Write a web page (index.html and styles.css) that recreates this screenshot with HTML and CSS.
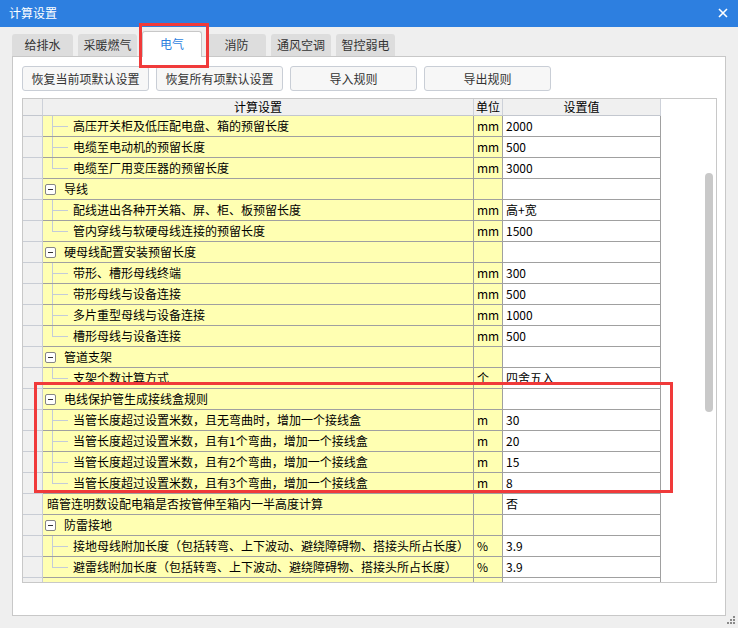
FILE: index.html
```html
<!DOCTYPE html>
<html lang="zh-CN">
<head>
<meta charset="utf-8">
<title>计算设置</title>
<link rel="stylesheet" href="styles.css">
</head>
<body>
<div class="window">
  <div class="titlebar">
    <span class="title">计算设置</span>
    <svg class="close" width="10" height="10" viewBox="0 0 10 10"><path d="M1 1 L9 9 M9 1 L1 9" stroke="#fff" stroke-width="1.6" fill="none"/></svg>
  </div>
  <div class="tabs">
    <div class="tab w61">给排水</div>
    <div class="tab w59">采暖燃气</div>
    <div class="tab active w60">电气</div>
    <div class="tab w59">消防</div>
    <div class="tab w60">通风空调</div>
    <div class="tab w59">智控弱电</div>
  </div>
  <div class="panel">
    <div class="toolbar">
      <button class="btn">恢复当前项默认设置</button>
      <button class="btn">恢复所有项默认设置</button>
      <button class="btn">导入规则</button>
      <button class="btn">导出规则</button>
    </div>
    <div class="grid">
      <div class="table">
        <div class="row head">
          <div class="rh"></div>
          <div class="c-main">计算设置</div>
          <div class="c-unit">单位</div>
          <div class="c-val">设置值</div>
        </div>

        <div class="row">
          <div class="rh"></div>
          <div class="c-main child"><span class="branch"></span><span class="txt">高压开关柜及低压配电盘、箱的预留长度</span></div>
          <div class="c-unit">mm</div><div class="c-val">2000</div>
        </div>
        <div class="row">
          <div class="rh"></div>
          <div class="c-main child"><span class="branch"></span><span class="txt">电缆至电动机的预留长度</span></div>
          <div class="c-unit">mm</div><div class="c-val">500</div>
        </div>
        <div class="row">
          <div class="rh"></div>
          <div class="c-main child"><span class="branch last"></span><span class="txt">电缆至厂用变压器的预留长度</span></div>
          <div class="c-unit">mm</div><div class="c-val">3000</div>
        </div>

        <div class="row">
          <div class="rh"></div>
          <div class="c-main group"><span class="toggle"></span><span class="txt">导线</span></div>
          <div class="c-unit"></div><div class="c-val"></div>
        </div>
        <div class="row">
          <div class="rh"></div>
          <div class="c-main child"><span class="branch"></span><span class="txt">配线进出各种开关箱、屏、柜、板预留长度</span></div>
          <div class="c-unit">mm</div><div class="c-val">高+宽</div>
        </div>
        <div class="row">
          <div class="rh"></div>
          <div class="c-main child"><span class="branch last"></span><span class="txt">管内穿线与软硬母线连接的预留长度</span></div>
          <div class="c-unit">mm</div><div class="c-val">1500</div>
        </div>

        <div class="row">
          <div class="rh"></div>
          <div class="c-main group"><span class="toggle"></span><span class="txt">硬母线配置安装预留长度</span></div>
          <div class="c-unit"></div><div class="c-val"></div>
        </div>
        <div class="row">
          <div class="rh"></div>
          <div class="c-main child"><span class="branch"></span><span class="txt">带形、槽形母线终端</span></div>
          <div class="c-unit">mm</div><div class="c-val">300</div>
        </div>
        <div class="row">
          <div class="rh"></div>
          <div class="c-main child"><span class="branch"></span><span class="txt">带形母线与设备连接</span></div>
          <div class="c-unit">mm</div><div class="c-val">500</div>
        </div>
        <div class="row">
          <div class="rh"></div>
          <div class="c-main child"><span class="branch"></span><span class="txt">多片重型母线与设备连接</span></div>
          <div class="c-unit">mm</div><div class="c-val">1000</div>
        </div>
        <div class="row">
          <div class="rh"></div>
          <div class="c-main child"><span class="branch last"></span><span class="txt">槽形母线与设备连接</span></div>
          <div class="c-unit">mm</div><div class="c-val">500</div>
        </div>

        <div class="row">
          <div class="rh"></div>
          <div class="c-main group"><span class="toggle"></span><span class="txt">管道支架</span></div>
          <div class="c-unit"></div><div class="c-val"></div>
        </div>
        <div class="row">
          <div class="rh"></div>
          <div class="c-main child"><span class="branch last"></span><span class="txt">支架个数计算方式</span></div>
          <div class="c-unit">个</div><div class="c-val">四舍五入</div>
        </div>

        <div class="row">
          <div class="rh"></div>
          <div class="c-main group"><span class="toggle"></span><span class="txt">电线保护管生成接线盒规则</span></div>
          <div class="c-unit"></div><div class="c-val"></div>
        </div>
        <div class="row">
          <div class="rh"></div>
          <div class="c-main child"><span class="branch"></span><span class="txt">当管长度超过设置米数，且无弯曲时，增加一个接线盒</span></div>
          <div class="c-unit">m</div><div class="c-val">30</div>
        </div>
        <div class="row">
          <div class="rh"></div>
          <div class="c-main child"><span class="branch"></span><span class="txt">当管长度超过设置米数，且有1个弯曲，增加一个接线盒</span></div>
          <div class="c-unit">m</div><div class="c-val">20</div>
        </div>
        <div class="row">
          <div class="rh"></div>
          <div class="c-main child"><span class="branch"></span><span class="txt">当管长度超过设置米数，且有2个弯曲，增加一个接线盒</span></div>
          <div class="c-unit">m</div><div class="c-val">15</div>
        </div>
        <div class="row">
          <div class="rh"></div>
          <div class="c-main child"><span class="branch last"></span><span class="txt">当管长度超过设置米数，且有3个弯曲，增加一个接线盒</span></div>
          <div class="c-unit">m</div><div class="c-val">8</div>
        </div>

        <div class="row">
          <div class="rh"></div>
          <div class="c-main plain"><span class="txt">暗管连明数设配电箱是否按管伸至箱内一半高度计算</span></div>
          <div class="c-unit"></div><div class="c-val">否</div>
        </div>

        <div class="row">
          <div class="rh"></div>
          <div class="c-main group"><span class="toggle"></span><span class="txt">防雷接地</span></div>
          <div class="c-unit"></div><div class="c-val"></div>
        </div>
        <div class="row">
          <div class="rh"></div>
          <div class="c-main child"><span class="branch"></span><span class="txt">接地母线附加长度（包括转弯、上下波动、避绕障碍物、搭接头所占长度）</span></div>
          <div class="c-unit">%</div><div class="c-val">3.9</div>
        </div>
        <div class="row">
          <div class="rh"></div>
          <div class="c-main child"><span class="branch last"></span><span class="txt">避雷线附加长度（包括转弯、上下波动、避绕障碍物、搭接头所占长度）</span></div>
          <div class="c-unit">%</div><div class="c-val">3.9</div>
        </div>

        <div class="row">
          <div class="rh"></div>
          <div class="c-main group"><span class="toggle"></span></div>
          <div class="c-unit"></div><div class="c-val"></div>
        </div>
      </div>
      <div class="spacer"></div>
      <div class="vscroll"><div class="thumb"></div></div>
    </div>
  </div>

  <div class="mark mark-tab"></div>
  <div class="mark mark-rows"></div>
  <svg class="grip" width="10" height="10" viewBox="0 0 10 10">
    <rect x="7" y="1" width="2" height="2" fill="#8a8a8a"/>
    <rect x="4" y="4" width="2" height="2" fill="#8a8a8a"/>
    <rect x="7" y="4" width="2" height="2" fill="#8a8a8a"/>
    <rect x="1" y="7" width="2" height="2" fill="#8a8a8a"/>
    <rect x="4" y="7" width="2" height="2" fill="#8a8a8a"/>
    <rect x="7" y="7" width="2" height="2" fill="#8a8a8a"/>
  </svg>
</div>
</body>
</html>
```

FILE: styles.css
```css
* { box-sizing: border-box; }

html, body {
  margin: 0;
  padding: 0;
}

body {
  width: 738px;
  height: 628px;
  overflow: hidden;
  background: #efefef;
  font-family: "Noto Sans CJK SC", "Microsoft YaHei", "Noto Sans", sans-serif;
  font-size: 12px;
  color: #000;
}

.window {
  position: relative;
  width: 738px;
  height: 628px;
  background: #efefef;
}

.titlebar {
  height: 27px;
  background: #2d7fe0;
  display: flex;
  align-items: center;
  justify-content: space-between;
  padding: 0 10px 1px 9px;
}

.title {
  color: #fff;
  font-size: 12px;
  line-height: 16px;
}

.close {
  display: block;
}

.tabs {
  height: 29px;
  display: flex;
  align-items: flex-end;
  gap: 5px;
  padding-left: 12px;
}

.tab {
  height: 22px;
  background: #dddddd;
  border-radius: 3px 3px 0 0;
  color: #333;
  font-size: 12px;
  line-height: 22px;
  text-align: center;
}

.w61 { width: 61px; }
.w60 { width: 60px; }
.w59 { width: 59px; }

.tab.active {
  position: relative;
  z-index: 1;
  height: 26px;
  margin-bottom: -1px;
  background: #fff;
  border: 1px solid #c8c8c8;
  border-bottom: none;
  color: #2d7fe0;
  line-height: 24px;
}

.panel {
  margin: 0 12px;
  height: 560px;
  background: #fff;
  border: 1px solid #c8c8c8;
  padding: 9px 0 0 9px;
}

.toolbar {
  display: flex;
  gap: 7px;
  height: 25px;
}

.btn {
  width: 127px;
  height: 25px;
  margin: 0;
  padding: 0;
  border: 1px solid #c9ced6;
  border-radius: 3px;
  background: #f7f7f7;
  color: #333;
  font-family: inherit;
  font-size: 12px;
  line-height: 22px;
}

.grid {
  margin-top: 7px;
  width: 695px;
  height: 485px;
  border: 1px solid #c8c8c8;
  background: #fff;
  display: flex;
  overflow: hidden;
}

.table {
  flex: 0 0 638px;
  display: flex;
  flex-direction: column;
}

.spacer {
  flex: 1;
}

.vscroll {
  flex: 0 0 15px;
  padding: 74px 0 0 4px;
}

.thumb {
  width: 8px;
  height: 239px;
  border-radius: 4px;
  background: #c9c9c9;
}

.row {
  display: flex;
  flex: 0 0 21px;
  height: 21px;
}

.row > div {
  border-right: 1px solid #a0a0a0;
  border-bottom: 1px solid #a0a0a0;
  line-height: 20px;
  white-space: nowrap;
  overflow: hidden;
}

.rh {
  width: 20px;
  background: #f0f0f0;
}

.row > .rh {
  border-right-color: #c9cdd5;
  border-bottom-color: #c9cdd5;
}

.c-main {
  width: 431px;
  background: #ffffb2;
  display: flex;
  align-items: stretch;
}

.c-unit {
  width: 29px;
  background: #ffffb2;
  padding-left: 3px;
}

.c-val {
  width: 158px;
  background: #fff;
  padding-left: 3px;
}

.row.head {
  flex: 0 0 17px;
  height: 17px;
}

.row.head > div {
  background: #f0f0f0;
  border-right-color: #cdd1d9;
  border-bottom-color: #c3c7cf;
  line-height: 16px;
  text-align: center;
  padding: 0;
  display: block;
}

.child {
  padding-left: 9px;
}

.branch {
  flex: 0 0 16px;
  margin-right: 5px;
  background:
    linear-gradient(#c3cbd9, #c3cbd9) 0 0 / 1px 100% no-repeat,
    linear-gradient(#c3cbd9, #c3cbd9) 0 50% / 100% 1px no-repeat;
}

.branch.last {
  background:
    linear-gradient(#c3cbd9, #c3cbd9) 0 0 / 1px 50% no-repeat,
    linear-gradient(#c3cbd9, #c3cbd9) 0 50% / 100% 1px no-repeat;
}

.group {
  padding-left: 2px;
  align-items: center;
}

.toggle {
  flex: 0 0 11px;
  width: 11px;
  height: 11px;
  margin-right: 8px;
  border: 1px solid #858585;
  border-radius: 2px;
  background: linear-gradient(#333, #333) center / 5px 1px no-repeat, #fff;
}

.plain {
  padding-left: 4px;
}

.txt {
  line-height: 20px;
}

.mark {
  position: absolute;
  border: 3px solid #f03a3a;
  pointer-events: none;
}

.mark-tab {
  left: 139px;
  top: 23px;
  width: 70px;
  height: 45px;
}

.mark-rows {
  left: 34px;
  top: 382px;
  width: 639px;
  height: 111px;
}

.grip {
  position: absolute;
  left: 726px;
  top: 615px;
}
```
